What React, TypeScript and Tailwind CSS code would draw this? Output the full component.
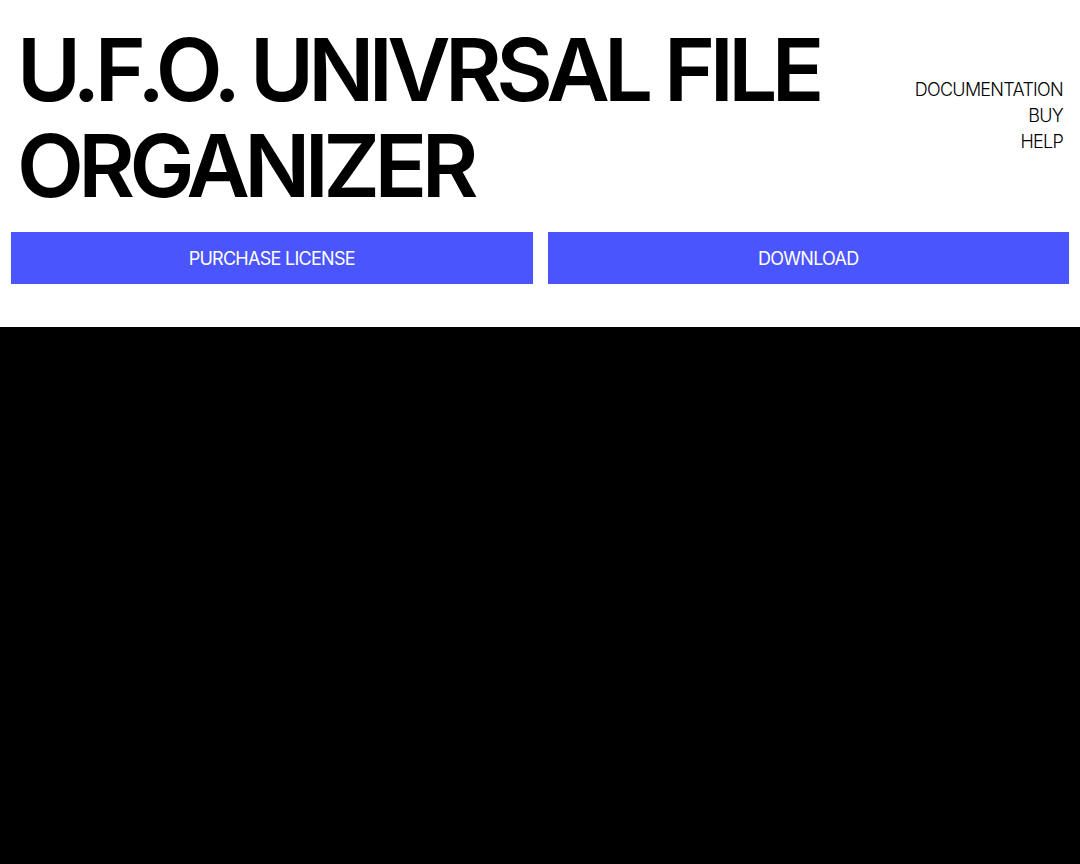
export default function App() {
  return (
    <div className="min-h-[864px] bg-black font-['Inter',sans-serif]">
      <div className="bg-white pb-[43px]">
        <header className="flex items-start justify-between pl-[17px] pr-[17px] pt-[22px]">
          <h1 className="w-[860px] text-[87px] font-semibold leading-[96px] tracking-[-0.064em] text-black">
            U.F.O. UNIVRSAL FILE ORGANIZER
          </h1>
          <nav className="mt-[55px] flex flex-col items-end text-[18px] font-light leading-[26px] tracking-[-0.04em] text-black">
            <a href="#">DOCUMENTATION</a>
            <a href="#">BUY</a>
            <a href="#">HELP</a>
          </nav>
        </header>
        <div className="mt-[18px] grid grid-cols-2 gap-[15px] px-[11px]">
          <button className="h-[52px] bg-[#4b55fe] text-[18px] tracking-[-0.04em] text-white">
            PURCHASE LICENSE
          </button>
          <button className="h-[52px] bg-[#4b55fe] text-[18px] tracking-[-0.04em] text-white">
            DOWNLOAD
          </button>
        </div>
      </div>
    </div>
  );
}
